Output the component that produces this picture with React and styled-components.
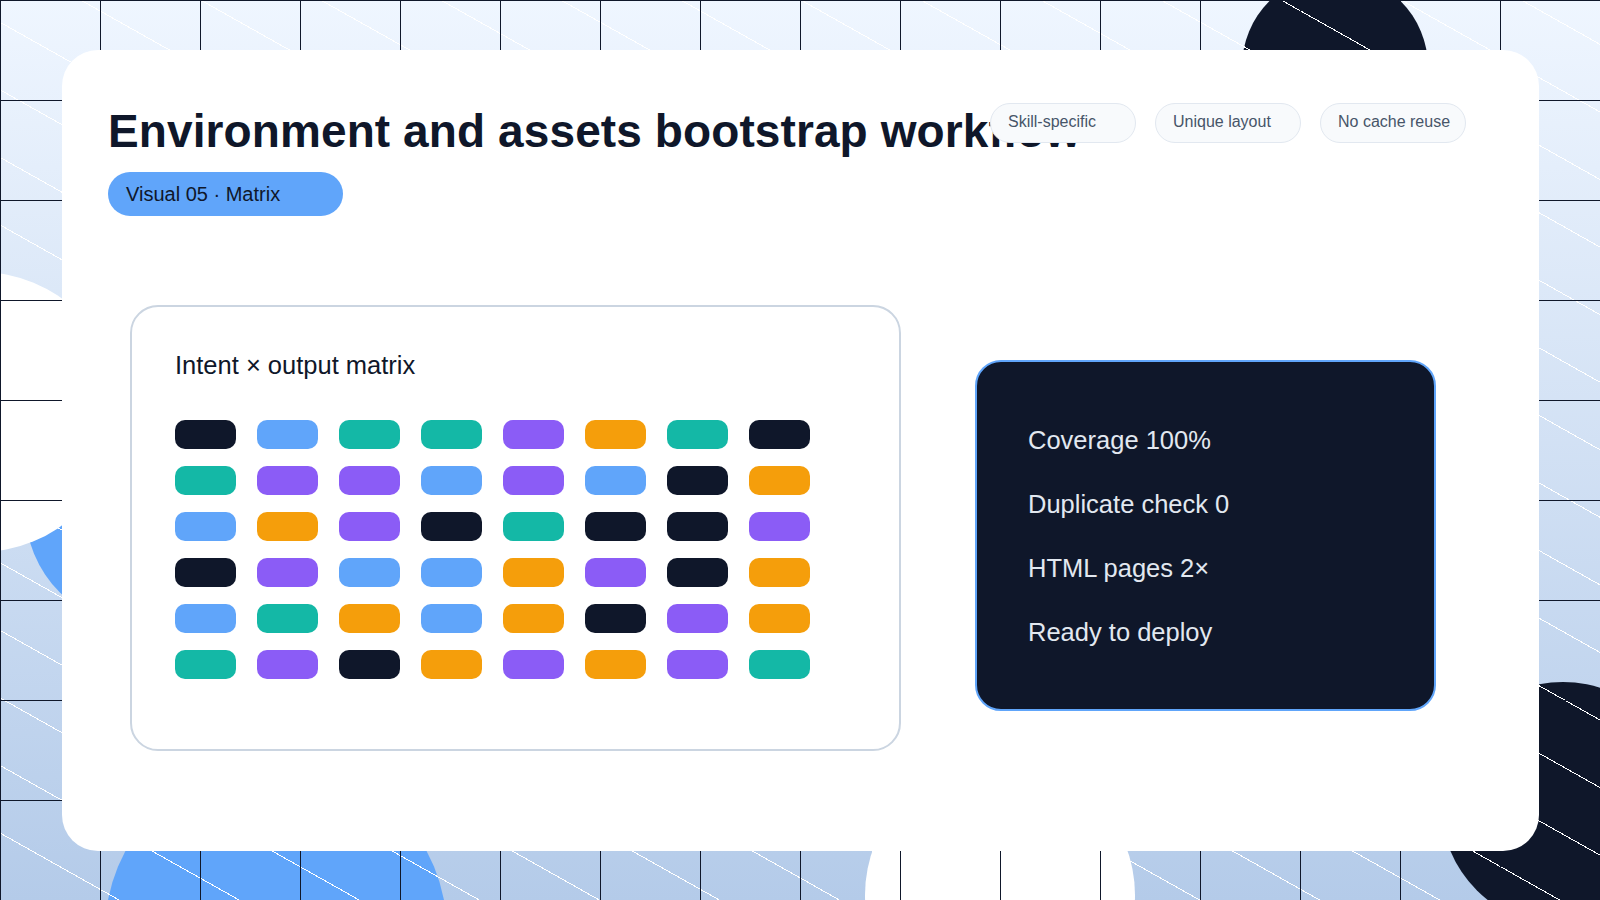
import React from 'react';
import styled, { createGlobalStyle } from 'styled-components';

const NAVY = '#0f172a';
const BLUE = '#60a5fa';
const TEAL = '#14b8a6';
const VIOLET = '#8b5cf6';
const ORANGE = '#f59e0b';

const GlobalStyle = createGlobalStyle`
  html, body {
    margin: 0;
    padding: 0;
    overflow: hidden;
  }
  body {
    font-family: "Liberation Sans", Arial, sans-serif;
  }
`;

const Page = styled.div`
  position: relative;
  width: 1600px;
  height: 900px;
  box-sizing: border-box;
  padding: 50px 61px 49px 62px;
  overflow: hidden;
  background: linear-gradient(180deg, #eff6ff 0%, #b4cbe9 100%);
`;

const Blob = styled.div`
  position: absolute;
  left: ${(p) => p.$x - p.$r}px;
  top: ${(p) => p.$y - p.$r}px;
  width: ${(p) => p.$r * 2}px;
  height: ${(p) => p.$r * 2}px;
  border-radius: 50%;
  background: ${(p) => p.$color};
`;

const Pattern = styled.div`
  position: absolute;
  inset: 0;
  background-image:
    linear-gradient(${NAVY} 1px, transparent 1px),
    linear-gradient(90deg, ${NAVY} 1px, transparent 1px),
    repeating-linear-gradient(29.37deg, transparent 0 57.9px, #fff 57.9px 58.88px);
  background-size: 100px 100px, 100px 100px, auto;
`;

const Card = styled.main`
  position: relative;
  height: 100%;
  box-sizing: border-box;
  padding: 53px 73px 0 46px;
  background: #fff;
  border-radius: 36px;
`;

const Header = styled.header`
  display: flex;
  justify-content: space-between;
  align-items: flex-start;
`;

const Heading = styled.div`
  width: 800px;
`;

const Title = styled.h1`
  margin: 0;
  font-size: 46px;
  line-height: 56px;
  font-weight: 700;
  letter-spacing: 0.1px;
  color: ${NAVY};
  white-space: nowrap;
`;

const Tag = styled.div`
  width: 235px;
  height: 44px;
  margin-top: 13px;
  box-sizing: border-box;
  padding-left: 18px;
  border-radius: 22px;
  background: ${BLUE};
  color: ${NAVY};
  font-size: 20px;
  line-height: 44px;
`;

const Chips = styled.div`
  display: flex;
  gap: 19px;
`;

const Chip = styled.span`
  width: 146px;
  height: 40px;
  box-sizing: border-box;
  padding-left: 17px;
  border: 1px solid #e2e8f0;
  border-radius: 20px;
  background: #f8fafc;
  color: #475569;
  font-size: 16px;
  line-height: 36px;
`;

const Body = styled.div`
  display: flex;
  align-items: flex-start;
  margin-top: 89px;
  margin-left: 22px;
  gap: 74px;
`;

const MatrixPanel = styled.section`
  width: 771px;
  height: 446px;
  box-sizing: border-box;
  padding: 43px 43px;
  border: 2px solid #cbd5e1;
  border-radius: 28px;
`;

const MatrixTitle = styled.h2`
  margin: 0;
  font-size: 25.5px;
  line-height: 30px;
  font-weight: 400;
  color: ${NAVY};
`;

const Matrix = styled.div`
  display: grid;
  grid-template-columns: repeat(8, 61px);
  grid-auto-rows: 29px;
  column-gap: 21px;
  row-gap: 17px;
  margin-top: 40px;
`;

const Cell = styled.div`
  border-radius: 10px;
  background: ${(p) => p.$color};
`;

const StatsPanel = styled.section`
  display: flex;
  flex-direction: column;
  gap: 34px;
  width: 461px;
  height: 351px;
  margin-top: 55px;
  box-sizing: border-box;
  padding: 63px 51px;
  border: 2px solid ${BLUE};
  border-radius: 26px;
  background: ${NAVY};
`;

const Stat = styled.div`
  font-size: 25.5px;
  line-height: 30px;
  color: #e2e8f0;
`;

const N = NAVY, B = BLUE, T = TEAL, V = VIOLET, O = ORANGE;
const cells = [
  N, B, T, T, V, O, T, N,
  T, V, V, B, V, B, N, O,
  B, O, V, N, T, N, N, V,
  N, V, B, B, O, V, N, O,
  B, T, O, B, O, N, V, O,
  T, V, N, O, V, O, V, T,
];

const chips = ['Skill-specific', 'Unique layout', 'No cache reuse'];
const stats = ['Coverage 100%', 'Duplicate check 0', 'HTML pages 2×', 'Ready to deploy'];

const App = () => {
  return (
    <>
      <GlobalStyle />
      <Page>
        <Blob $x={145} $y={508} $r={120} $color={BLUE} />
        <Blob $x={-20} $y={412} $r={140} $color="#fff" />
        <Blob $x={1335} $y={67} $r={93} $color={NAVY} />
        <Blob $x={276} $y={932} $r={171} $color={BLUE} />
        <Blob $x={1000} $y={895} $r={135} $color="#fff" />
        <Blob $x={1563} $y={804} $r={122} $color={NAVY} />
        <Pattern />
        <Card>
          <Header>
            <Heading>
              <Title>Environment and assets bootstrap workflow</Title>
              <Tag>Visual 05 · Matrix</Tag>
            </Heading>
            <Chips>
              {chips.map((c) => (
                <Chip key={c}>{c}</Chip>
              ))}
            </Chips>
          </Header>
          <Body>
            <MatrixPanel>
              <MatrixTitle>Intent × output matrix</MatrixTitle>
              <Matrix>
                {cells.map((c, i) => (
                  <Cell key={i} $color={c} />
                ))}
              </Matrix>
            </MatrixPanel>
            <StatsPanel>
              {stats.map((s) => (
                <Stat key={s}>{s}</Stat>
              ))}
            </StatsPanel>
          </Body>
        </Card>
      </Page>
    </>
  );
};

export default App;
